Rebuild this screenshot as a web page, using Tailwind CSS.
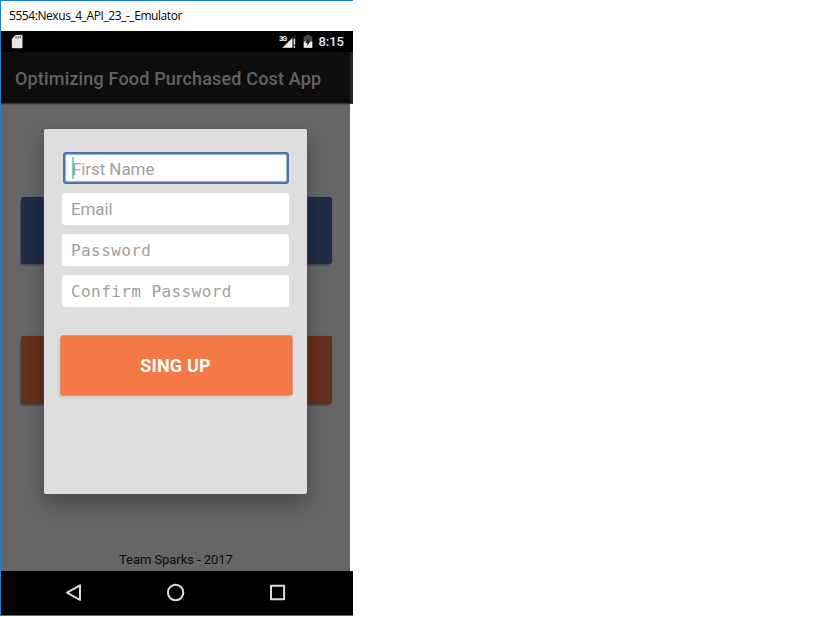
<!DOCTYPE html>
<html lang="en">
<head>
<meta charset="utf-8">
<title>5554:Nexus_4_API_23_-_Emulator</title>
<script src="https://cdn.jsdelivr.net/npm/@tailwindcss/browser@4"></script>
</head>
<body class="bg-white overflow-hidden font-['Roboto',sans-serif]">
<div class="w-[353px] h-[616px] flex flex-col overflow-hidden border-l border-t border-b border-[#1a7fd6]">
  <header class="h-[30px] shrink-0 flex items-center pl-2 bg-white">
    <span class="font-['Open_Sans','Noto_Sans',sans-serif] text-[12px] leading-4 tracking-[-0.43px] text-black whitespace-nowrap">5554:Nexus_4_API_23_-_Emulator</span>
  </header>

  <!-- Android status bar -->
  <div class="h-[21px] shrink-0 bg-black flex items-center justify-between pl-[10px] pr-[9px]">
    <svg class="w-3 h-[15px]" viewBox="0 0 12 15"><path d="M4.5 1H10.5Q11.5 1 11.5 2V13Q11.5 14.2 10.4 14.2H1.9Q.8 14.2 .8 13V5Z" fill="#e6e6e6"/><path d="M5 2.2v2M7.2 2.2v2M9.4 2.2v2" stroke="#555" stroke-width="1.2"/></svg>
    <div class="flex items-center">
      <svg class="w-[18px] h-[15px]" viewBox="0 0 18 15"><path d="M16.5 1V13.7H4Z" fill="#333"/><path d="M13.3 4V13.7H3.3Z" fill="#f0f0f0"/><path d="M15.4 5v5.5M15.4 12v1.7" stroke="#ddd" stroke-width="1.4"/><text x="0" y="6.5" font-family="Roboto" font-size="7.5" font-weight="700" fill="#eee" textLength="8">3G</text></svg>
      <svg class="w-[10px] h-[15px] ml-[6px]" viewBox="0 0 10 15"><path d="M3 1h4v1.3h2.3V13.8H.7V2.3H3Z" fill="#4a4a4a"/><path d="M.7 7.5H9.3V13.8H.7Z" fill="#eee"/><path d="M6 4L2.3 9H4.4L4 12L7.7 7H5.6Z" fill="#111"/></svg>
      <span class="ml-[5px] text-[13px] leading-5 font-medium text-[#e8e8e8] tracking-[0px]">8:15</span>
    </div>
  </div>

  <!-- App bar -->
  <div class="h-[51px] shrink-0 flex bg-[#0d0d0d]">
    <div class="flex-1 flex items-center pl-[14px] pt-[3px]"><h1 class="text-[18px] leading-6 font-medium text-[#626262] tracking-[0.17px] whitespace-nowrap">Optimizing Food Purchased Cost App</h1></div>
    <div class="w-[3px] bg-[#242424]"></div>
  </div>
  <div class="h-px shrink-0 bg-[#333]"></div>

  <!-- Dimmed activity -->
  <main class="relative h-[467px] shrink-0 w-[349px] bg-[#666] shadow-[inset_0_2px_1px_-1px_#555] flex flex-col">
    <div class="mt-[93px] w-[311px] h-[67px] rounded-[3px] bg-[#1e2c45] shadow-[0_0_1px_#333,-2px_3px_1px_-1px_#4d4d4d] ml-5"></div>
    <div class="mt-[72px] w-[311px] h-[68px] rounded-[3px] bg-[#65301d] shadow-[0_0_1px_#333,-2px_3px_1px_-1px_#4d4d4d] ml-5"></div>
    <p class="mt-auto mb-[3px] ml-[118px] text-[13px] leading-4 tracking-[-0.06px] text-[#0b0b0b] whitespace-nowrap">Team Sparks - 2017</p>

    <section class="absolute left-[43px] top-[25px] w-[263px] h-[365px] rounded-[2px] bg-[#dedede] shadow-[0_0_1px_1px_rgba(90,90,90,0.4),0_10px_20px_rgba(0,0,0,0.3)] pt-[23px] px-[18px]">
      <form class="flex flex-col gap-[9px]">
        <div class="ml-px h-8 rounded-[3px] bg-white border-2 border-[#4a72ae] shadow-[inset_0_0_1px_0.5px_#4a72ae] flex items-center pl-[7px]"><i class="w-[2px] h-[22px] bg-[#80d0c6] shrink-0"></i><span class="text-[17px] leading-5 tracking-[-0.08px] text-[#9f9f9f] -ml-[2px] pt-px">First Name</span></div>
        <div class="h-8 rounded-[3px] bg-white flex items-center pl-[9px] text-[17px] leading-5 tracking-[-0.1px] text-[#9f9f9f]">Email</div>
        <div class="h-8 rounded-[3px] bg-white flex items-center pl-[9px] pt-[2px] font-['DejaVu_Sans_Mono',monospace] text-[16px] leading-5 tracking-[0.42px] text-[#9f9f9f]">Password</div>
        <div class="h-8 rounded-[3px] bg-white flex items-center pl-[9px] pt-[2px] font-['DejaVu_Sans_Mono',monospace] text-[16px] leading-5 tracking-[0.42px] text-[#9f9f9f]">Confirm Password</div>
        <div class="mt-[19px] -ml-[2px] -mr-[4px] h-[61px] rounded-[3px] bg-[#f57947] border border-[#d99580] shadow-[-3px_3px_1px_-1px_#cfcfcf] flex items-center justify-center pr-[2px] text-[18px] leading-6 font-bold tracking-[0.15px] text-white">SING UP</div>
      </form>
    </section>
  </main>

  <!-- Navigation bar -->
  <nav class="h-[44px] shrink-0 bg-black flex items-center pl-[63px] gap-[82px]">
    <svg class="w-5 h-5" viewBox="0 0 20 20" fill="none" stroke="#dcdcdc" stroke-width="2" stroke-linejoin="round"><path d="M16 2.3V17L3 9.7Z"/></svg>
    <svg class="w-5 h-5" viewBox="0 0 20 20" fill="none" stroke="#dcdcdc" stroke-width="2"><circle cx="9.6" cy="9.5" r="7.7"/></svg>
    <svg class="w-5 h-5" viewBox="0 0 20 20" fill="none" stroke="#dcdcdc" stroke-width="2" stroke-linejoin="round"><path d="M3 2.8H16.1V16.2H3Z"/></svg>
  </nav>
</div>
</body>
</html>
